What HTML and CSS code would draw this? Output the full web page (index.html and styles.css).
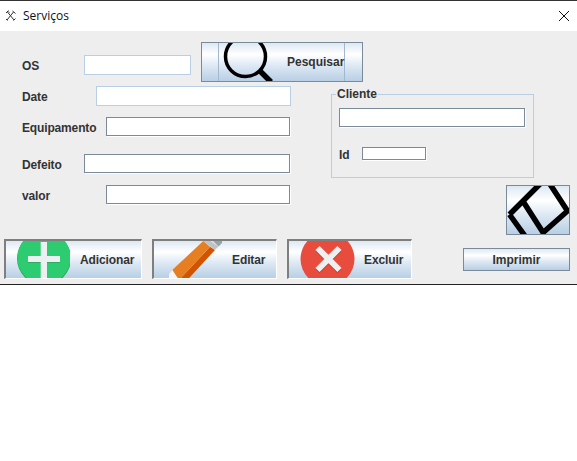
FILE: index.html
```html
<!DOCTYPE html>
<html lang="pt">
<head>
<meta charset="utf-8">
<title>Serviços</title>
<link rel="stylesheet" href="styles.css">
</head>
<body>
<div class="window">
  <header class="titlebar">
    <svg class="app-icon" width="11" height="11" viewBox="0 0 11 11"><path d="M2.500 2l6.500 8M8.500 2L2 10M1 3l2.500-2.500M7.500 1l3 2.500M3.500 1.500l1 1M1 9l1.500 1.500M8.500 10.500l2-2" fill="none" stroke="#333" stroke-width="1"/></svg>
    <span class="title">Serviços</span>
    <svg class="close" width="12" height="12" viewBox="0 0 12 12"><path d="M1 1l10 10M11 1L1 11" fill="none" stroke="#111" stroke-width="1"/></svg>
  </header>
  <main class="panel">
    <div class="row-top">
      <label class="label">OS</label>
      <input class="field field-os light" type="text">
      <button class="btn btn-search" type="button">
        <span class="search-inner">
          <svg class="search-icon" width="64" height="38" viewBox="0 0 64 38"><circle cx="26.500" cy="13.500" r="20" fill="none" stroke="#000" stroke-width="3.500"/><path d="M41 28l11 11" stroke="#000" stroke-width="5.500"/></svg>
          <span>Pesquisar</span>
        </span>
      </button>
    </div>
    <div class="body">
      <div class="fields">
        <div class="row row-date"><label class="label">Date</label><input class="field field-date light" type="text"></div>
        <div class="row row-equip"><label class="label">Equipamento</label><input class="field field-wide" type="text"></div>
        <div class="row row-defeito"><label class="label">Defeito</label><input class="field field-defeito" type="text"></div>
        <div class="row row-valor"><label class="label">valor</label><input class="field field-wide" type="text"></div>
      </div>
      <div class="side">
        <fieldset class="group">
          <legend class="legend">Cliente</legend>
          <input class="field field-cliente" type="text">
          <div class="row-id"><label class="label">Id</label><input class="field field-id" type="text"></div>
        </fieldset>
        <button class="btn btn-eraser" type="button" aria-label="Limpar">
          <svg width="62" height="48" viewBox="0 0 62 48"><path d="M2.500 28.500L39-8 60.500 25 35 47.500M2.500 28.500L18 50M16.500 16L37 48" fill="none" stroke="#000" stroke-width="5.500"/></svg>
        </button>
      </div>
    </div>
    <div class="actions">
      <button class="btn btn-action btn-add" type="button">
        <svg width="64" height="38" viewBox="0 0 64 38"><circle cx="38" cy="17.500" r="27" fill="#27ae60"/><circle cx="38" cy="16.500" r="26.500" fill="#2ecc71"/><rect x="22" y="16" width="32" height="6" fill="#27ae60"/><rect x="22" y="15" width="32" height="6" fill="#ecf0f1"/><rect x="34.700" y="1" width="6.300" height="37" fill="#ecf0f1"/></svg>
        <span class="btn-label">Adicionar</span>
      </button>
      <button class="btn btn-action btn-edit" type="button">
        <svg width="72" height="38" viewBox="0 0 72 38"><path d="M26 38L56 5.700l5 3.300L34.300 38z" fill="#d35400"/><path d="M18.300 29L49.300 0l6.700 5.700L26 38h-2z" fill="#e67e22"/><path d="M49.300 0l3-3 12 8.500-3.500 3.500z" fill="#bdc3c7"/><path d="M56-3h12v5l-3.500 3.500z" fill="#95a5a6"/><path d="M18.300 29l-3.300 4.300V38h9.300z" fill="#f4f6f7"/></svg>
        <span class="btn-label">Editar</span>
      </button>
      <button class="btn btn-action btn-del" type="button">
        <svg width="72" height="38" viewBox="0 0 72 38"><circle cx="38.500" cy="18" r="27" fill="#e74c3c"/><path d="M28.500 8l22 22M50.500 8l-22 22" fill="none" stroke="#c0392b" stroke-width="6"/><path d="M28.500 7l22 22M50.500 7l-22 22" fill="none" stroke="#ecf0f1" stroke-width="6"/></svg>
        <span class="btn-label">Excluir</span>
      </button>
      <button class="btn btn-print" type="button">Imprimir</button>
    </div>
  </main>
</div>
</body>
</html>
```
FILE: styles.css
```css
* { box-sizing: border-box; }
html, body { margin: 0; height: 100%; background: #fff; }
body { font-family: "Liberation Sans", Arial, sans-serif; }
.window { width: 577px; height: 285px; border-top: 1px solid #333; border-bottom: 1px solid #222; display: flex; flex-direction: column; }
.titlebar { height: 30px; background: #fff; display: flex; align-items: center; padding: 0 7px 1px 5px; flex: none; }
.app-icon { margin-right: 7px; }
.title { font-family: "Open Sans", "Noto Sans", sans-serif; font-size: 12px; color: #111; }
.close { margin-left: auto; }
.panel { flex: 1; background: #eeeeee; padding-top: 11px; }
.label { font-size: 12px; font-weight: bold; color: #333; white-space: nowrap; letter-spacing: -0.15px; padding-top: 2px; }
.field { display: block; background: #fff; margin: 0; padding: 0; outline: none; border: 1px solid #7a8a99; box-shadow: 1px 1px 0 #fff; height: 19px; border-radius: 0; }
.field.light { border-color: #b8cfe5; box-shadow: none; height: 20px; }
.btn { font: bold 12px "Liberation Sans", Arial, sans-serif; color: #333; border: 1px solid #7a8a99; border-radius: 0; padding: 0; margin: 0; background: linear-gradient(#dde8f3 0, #fff 30%, #dde8f3 60%, #b8cfe5 100%); }
.row-top { display: flex; align-items: center; height: 40px; padding-left: 22px; }
.row-top .label { width: 62px; margin-top: 6px; }
.field-os { width: 107px; margin-top: 6px; }
.btn-search { width: 162px; height: 40px; margin-left: 10px; overflow: hidden; }
.search-inner { display: flex; align-items: center; height: 100%; margin: 0 17px 0 16px; border-left: 1px solid #a3b8cc; border-right: 1px solid #a3b8cc; white-space: nowrap; }
.search-icon { flex: none; align-self: flex-start; }
.search-inner span { margin-left: 4px; }
.body { display: flex; margin-top: 4px; height: 149px; }
.fields { width: 269px; margin-left: 22px; flex: none; }
.row { display: flex; align-items: center; }
.row .label { flex: none; }
.row-date .label { width: 74px; }
.field-date { width: 195px; }
.row-equip { margin-top: 11px; }
.row-equip .label { width: 84px; }
.field-wide { width: 184px; }
.row-defeito { margin-top: 18px; }
.row-defeito .label { width: 62px; }
.field-defeito { width: 206px; }
.row-valor { margin-top: 12px; }
.row-valor .label { width: 84px; }
.side { margin-left: 40px; width: 239px; padding-top: 1px; }
.group { width: 203px; height: 91px; margin: 0; padding: 0 0 0 7px; border: 1px solid #b8cfe5; }
.legend { font-size: 12px; font-weight: bold; color: #333; padding: 0 1px; margin-left: -3px; line-height: 14px; }
.field-cliente { width: 186px; margin-top: 7px; }
.row-id { display: flex; align-items: flex-start; margin-top: 20px; }
.row-id .label { width: 23px; padding-top: 1px; }
.field-id { width: 64px; height: 13px; }
.btn-eraser { display: block; width: 64px; height: 50px; margin: 7px 0 0 175px; overflow: hidden; }
.btn-eraser svg { display: block; }
.actions { display: flex; margin-top: 4px; padding-left: 4px; align-items: flex-start; }
.btn-action { display: flex; align-items: center; height: 40px; width: 125px; padding: 0; overflow: hidden; border-style: solid; border-width: 2px 1px 1px 2px; border-color: #7f7f7f #fff #fff #7f7f7f; margin-right: 10px; letter-spacing: -0.1px; }
.btn-action svg { flex: none; align-self: flex-start; }
.btn-add { width: 138px; }
.btn-add .btn-label { margin-left: 10px; }
.btn-edit .btn-label { margin-left: 6px; }
.btn-del .btn-label { margin-left: 3px; }
.btn-print { width: 107px; height: 23px; margin: 9px 0 0 41px; }
```
